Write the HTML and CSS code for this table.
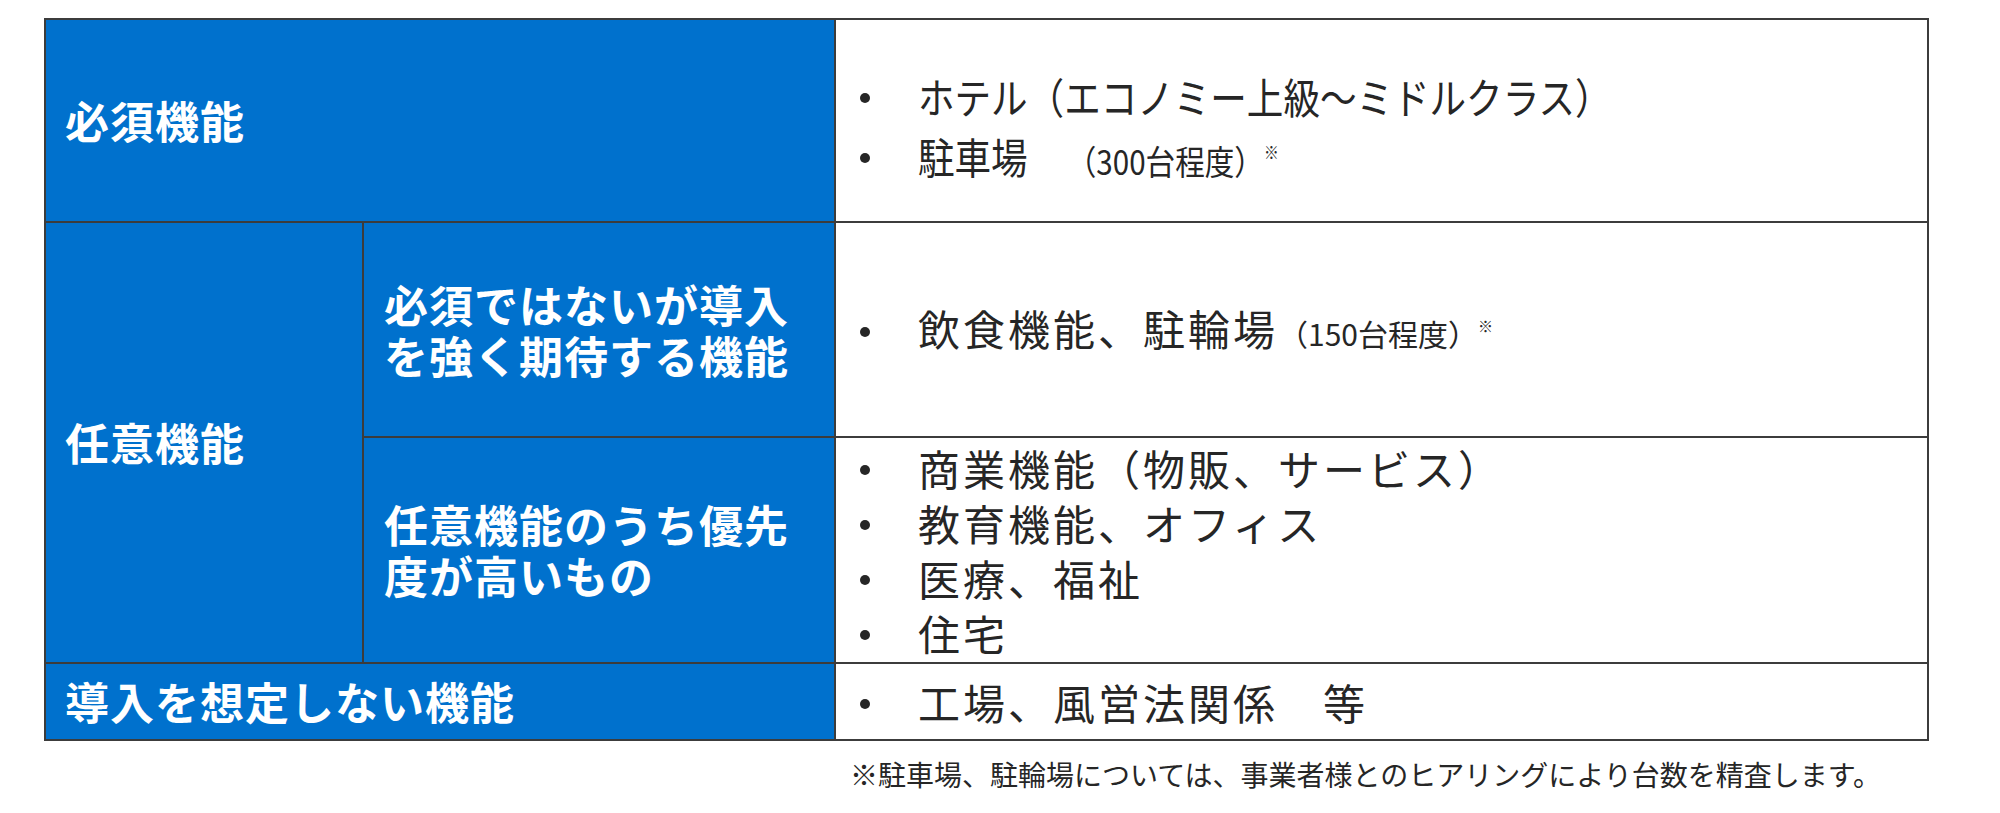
FILE: index.html
```html
<!DOCTYPE html>
<html lang="ja">
<head>
<meta charset="utf-8">
<title>機能区分</title>
<link rel="stylesheet" href="styles.css">
</head>
<body>
<div class="page">
  <div class="grid">
    <div class="head head-wide r1">必須機能</div>
    <div class="body r1 small-body">
      <div class="item"><span class="dot"></span><span class="txt">ホテル（エコノミー上級～ミドルクラス）</span></div>
      <div class="item"><span class="dot"></span><span class="txt">駐車場<span class="note gap">　（300台程度）</span><span class="mark">※</span></span></div>
    </div>

    <div class="head r23">任意機能</div>
    <div class="sub r2">必須ではないが導入<br>を強く期待する機能</div>
    <div class="body r2">
      <div class="item"><span class="dot"></span><span class="txt">飲食機能、駐輪場<span class="note">（150台程度）</span><span class="mark">※</span></span></div>
    </div>

    <div class="sub r3">任意機能のうち優先<br>度が高いもの</div>
    <div class="body r3">
      <div class="item"><span class="dot"></span><span class="txt">商業機能（物販、サービス）</span></div>
      <div class="item"><span class="dot"></span><span class="txt">教育機能、オフィス</span></div>
      <div class="item"><span class="dot"></span><span class="txt">医療、福祉</span></div>
      <div class="item"><span class="dot"></span><span class="txt">住宅</span></div>
    </div>

    <div class="head head-wide r4">導入を想定しない機能</div>
    <div class="body r4">
      <div class="item"><span class="dot"></span><span class="txt">工場、風営法関係　等</span></div>
    </div>
  </div>
  <p class="footnote">※駐車場、駐輪場については、事業者様とのヒアリングにより台数を精査します。</p>
</div>
</body>
</html>
```

FILE: styles.css
```css
html, body {
  margin: 0;
  padding: 0;
  background: #ffffff;
}

body {
  font-family: "Noto Sans CJK JP", "Noto Sans", sans-serif;
  color: #262626;
}

.page {
  padding: 18px 0 0 44px;
}

.grid {
  display: grid;
  width: 1885px;
  box-sizing: border-box;
  grid-template-columns: 316px 470px 1091px;
  grid-template-rows: 201px 213px 224px 75px;
  gap: 2px;
  padding: 2px;
  background: #3c3c3c;
}

.head,
.sub {
  background: #0071cd;
  color: #ffffff;
  font-weight: 700;
  font-size: 44px;
  letter-spacing: 1px;
  display: flex;
  align-items: center;
}

.head {
  padding-left: 19px;
  line-height: 1.2;
}

.head-wide {
  grid-column: 1 / 3;
}

.sub {
  padding-left: 20px;
  line-height: 51px;
  grid-column: 2 / 3;
}

.r1 { grid-row: 1; }
.r2 { grid-row: 2; }
.r3 { grid-row: 3; }
.r4 { grid-row: 4; }
.r23 { grid-row: 2 / 4; grid-column: 1 / 2; }

.body {
  grid-column: 3 / 4;
  background: #ffffff;
  display: flex;
  flex-direction: column;
  justify-content: center;
  font-size: 42px;
  letter-spacing: 3px;
  line-height: 55px;
}

.small-body {
  font-size: 42px;
  letter-spacing: 0;
  line-height: 56px;
  padding-top: 16px;
  box-sizing: border-box;
}

.small-body .txt {
  display: inline-block;
  transform: scaleX(0.87);
  transform-origin: left center;
}

.item {
  display: flex;
  align-items: center;
}

.dot {
  flex: none;
  width: 10px;
  height: 10px;
  border-radius: 50%;
  background: #262626;
  margin: 4px 48px 0 24px;
}

.txt {
  white-space: nowrap;
}

.note {
  font-size: 30px;
  letter-spacing: 0;
}

.small-body .note {
  font-size: 34px;
}

.gap {
  padding-left: 28px;
}

.mark {
  font-size: 15px;
  letter-spacing: 0;
  vertical-align: 0.9em;
  margin-left: 0;
}

.small-body .mark {
  font-size: 17px;
}

.footnote {
  margin: 15px 0 0 806px;
  font-size: 28px;
  line-height: 36px;
}
```
